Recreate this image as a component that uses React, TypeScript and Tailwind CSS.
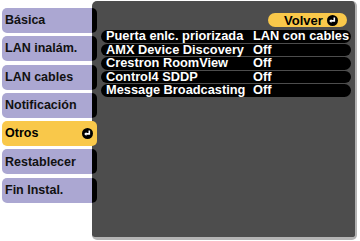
import React from 'react';

const tabs = [
  'Básica',
  'LAN inalám.',
  'LAN cables',
  'Notificación',
  'Otros',
  'Restablecer',
  'Fin Instal.',
];

const rows = [
  { label: 'Puerta enlc. priorizada', value: 'LAN con cables' },
  { label: 'AMX Device Discovery', value: 'Off' },
  { label: 'Crestron RoomView', value: 'Off' },
  { label: 'Control4 SDDP', value: 'Off' },
  { label: 'Message Broadcasting', value: 'Off' },
];

function EnterIcon() {
  return (
    <svg width="11" height="11" viewBox="0 0 11 11">
      <circle cx="5.5" cy="5.5" r="5.5" fill="#000" />
      <path d="M7.3 2.6 V5.9 H3.6" fill="none" stroke="#fff" strokeWidth="1.6" />
      <path d="M2.2 5.9 L4.4 3.9 L4.4 7.9 Z" fill="#fff" />
    </svg>
  );
}

export default function App() {
  return (
    <div
      className="flex h-[241px] w-[360px] overflow-hidden bg-white text-[12px] font-bold"
      style={{ fontFamily: '"Liberation Sans", Arial, sans-serif' }}
    >
      {/* menú lateral */}
      <div className="relative z-10 flex w-[92px] shrink-0 flex-col gap-[3.3px] pl-[2px] pt-[8px]">
        {tabs.map((tab) =>
          tab === 'Otros' ? (
            <div
              key={tab}
              className="flex h-[25px] w-[95px] items-center justify-between rounded-[5px] bg-[#f9c84a] pl-[3px] pr-[4px] text-[12.5px] text-black"
            >
              <span>{tab}</span>
              <EnterIcon />
            </div>
          ) : (
            <div
              key={tab}
              className="flex h-[25px] w-[95px] items-center rounded-[5px] border-r-[5px] border-black bg-[#aba7d2] pl-[3px] text-[12.5px] text-[#111]"
            >
              {tab}
            </div>
          )
        )}
      </div>

      {/* panel */}
      <div className="mt-[1px] flex h-[239px] w-[265px] flex-col rounded-[5px] border-b-[3px] border-r-[2px] border-[#b4b4b4] bg-[#4d4d4d] pl-[9px] pr-[4px] pt-[12px]">
        <div className="flex justify-end pr-[4px]">
          <div className="flex h-[14px] w-[79px] items-center justify-between rounded-full bg-[#f9c84a] pl-[16px] pr-[9px] text-[13px] text-black">
            <span className="leading-none">Volver</span>
            <EnterIcon />
          </div>
        </div>
        <div className="mt-[3px] flex flex-col gap-[1px]">
          {rows.map((row) => (
            <div
              key={row.label}
              className="flex h-[12.6px] items-center rounded-full bg-black pl-[5px] text-[12.8px] leading-none text-white"
            >
              <span className="w-[147px] whitespace-nowrap">{row.label}</span>
              <span className="whitespace-nowrap">{row.value}</span>
            </div>
          ))}
        </div>
      </div>
    </div>
  );
}
